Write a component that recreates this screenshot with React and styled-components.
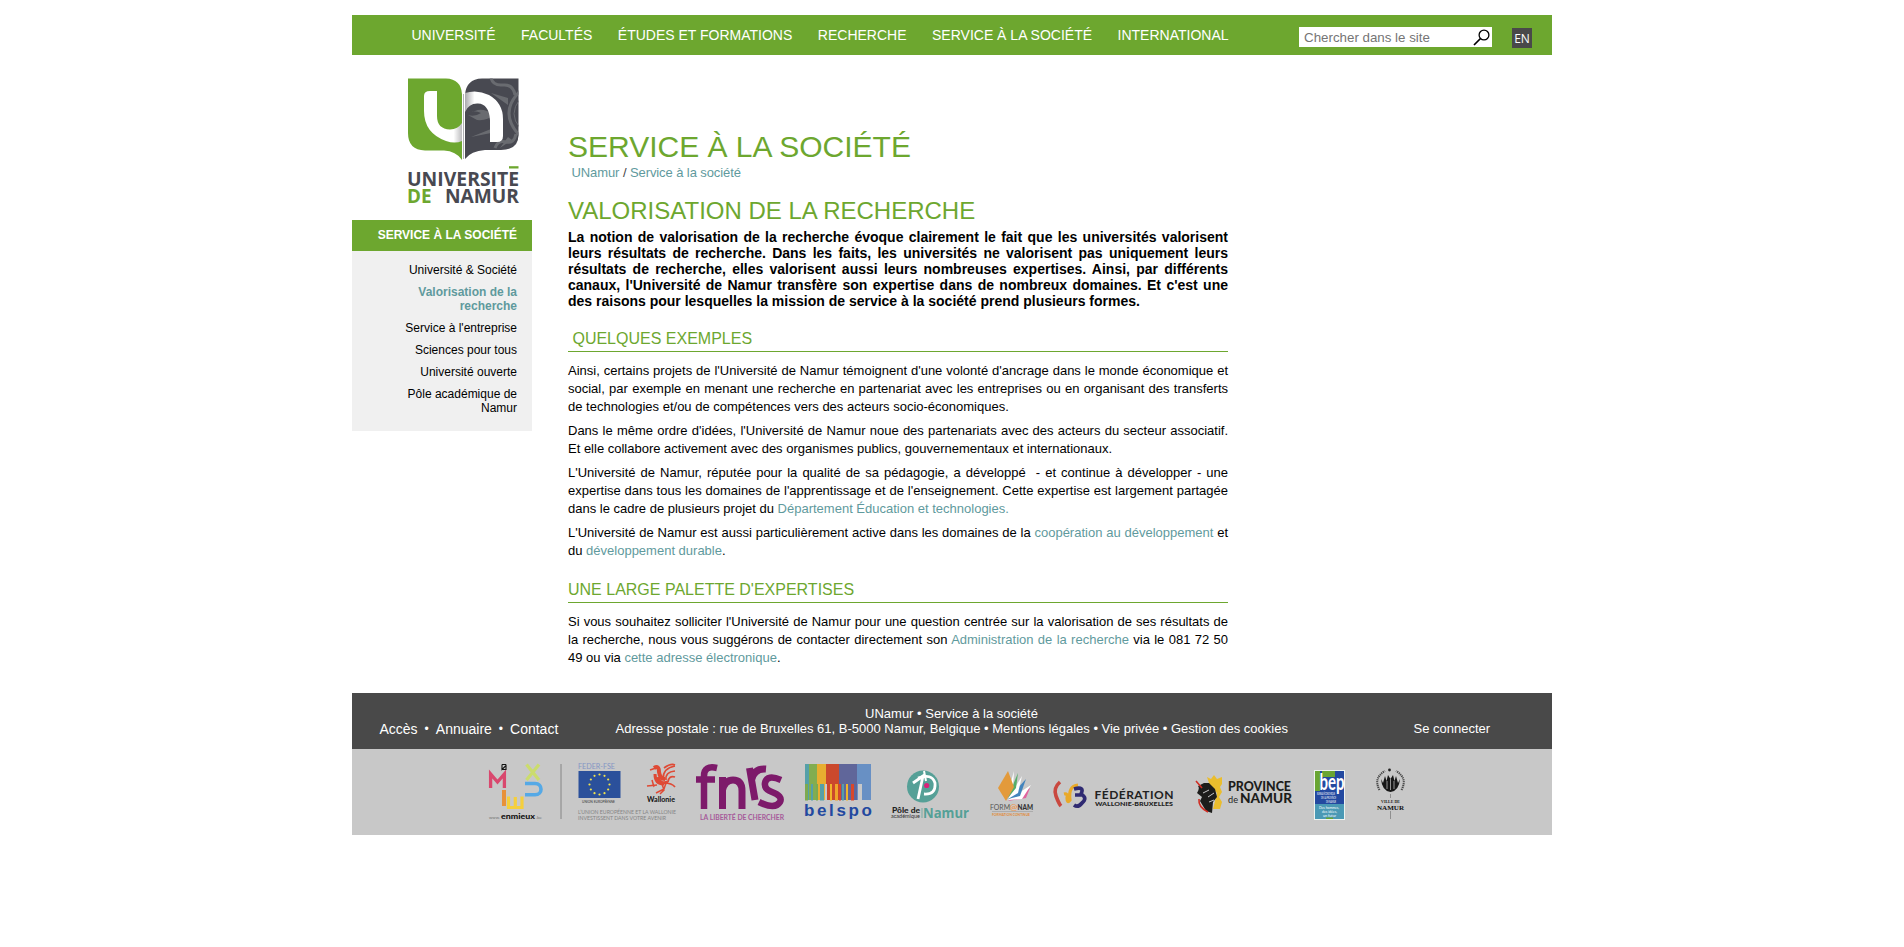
import React from 'react';
import styled, { createGlobalStyle } from 'styled-components';

const GREEN = '#6da72f';
const TEAL = '#5f9a9d';
const DARK = '#494949';

const GlobalStyle = createGlobalStyle`
  body {
    margin: 0;
    background: #fff;
    color: #000;
    font-family: Arial, 'Liberation Sans', sans-serif;
    font-size: 13px;
  }
  a { color: inherit; text-decoration: none; }
`;

const Page = styled.div`
  width: 1200px;
  margin: 0 auto;
  padding-top: 15px;
`;

const TopBar = styled.header`
  display: flex;
  height: 40px;
  background: ${GREEN};
`;

const Nav = styled.nav`
  display: flex;
  gap: 25.5px;
  width: 887.5px;
  padding-left: 59.5px;
  color: #fff;
  font-size: 14px;
  line-height: 40px;
  white-space: nowrap;
`;

const SearchBox = styled.form`
  display: flex;
  align-items: center;
  justify-content: space-between;
  box-sizing: border-box;
  width: 193px;
  height: 20px;
  margin-top: 12px;
  padding: 0 2px 0 5px;
  background: #fff;
`;

const SearchInput = styled.input`
  width: 160px;
  padding: 0;
  border: 0;
  outline: 0;
  background: none;
  font: 13.33px Arial, 'Liberation Sans', sans-serif;
  &::placeholder { color: #757575; opacity: 1; }
`;

const Lang = styled.a`
  width: 20px;
  height: 20px;
  margin: 13px 0 0 20px;
  background: ${DARK};
  color: #fff;
  font: 12px/21px 'Open Sans', sans-serif;
  text-align: center;
`;

const Main = styled.div`
  display: flex;
  height: 638px;
`;

const Sidebar = styled.aside`
  width: 180px;
`;

const LogoLink = styled.a`
  display: block;
  height: 142px;
  padding: 23px 0 0 55px;
`;

const MenuTitle = styled.div`
  height: 31px;
  padding-right: 15px;
  background: ${GREEN};
  color: #fff;
  font-size: 12px;
  font-weight: bold;
  line-height: 30px;
  text-align: right;
`;

const Menu = styled.ul`
  display: flex;
  flex-direction: column;
  gap: 8px;
  box-sizing: border-box;
  height: 180px;
  margin: 0;
  padding: 12px 15px 0 50px;
  background: #f0f0f0;
  list-style: none;
`;

const MenuItem = styled.li`
  color: ${(p) => (p.$active ? TEAL : '#000')};
  font-size: 12px;
  font-weight: ${(p) => (p.$active ? 'bold' : 'normal')};
  line-height: 14px;
  text-align: right;
`;

const Content = styled.main`
  width: 660px;
  padding: 75px 0 0 36px;
`;

const PageTitle = styled.h1`
  margin: 0 0 1px;
  color: ${GREEN};
  font-size: 30px;
  font-weight: normal;
  line-height: 34px;
`;

const Breadcrumb = styled.div`
  padding-left: 3.5px;
  color: ${TEAL};
  letter-spacing: -0.09px;
  line-height: 15px;
  span { color: #444; }
`;

const Heading = styled.h2`
  margin: 17px 0 5px;
  color: ${GREEN};
  font-size: 24px;
  font-weight: normal;
  line-height: 27px;
`;

const Lead = styled.p`
  margin: 0;
  font-size: 14px;
  font-weight: bold;
  line-height: 16px;
  text-align: justify;
`;

const SectionTitle = styled.h3`
  margin: 21px 0 10px;
  padding-bottom: 3px;
  border-bottom: 1px solid ${GREEN};
  color: ${GREEN};
  font-size: 16px;
  font-weight: normal;
  line-height: 18px;
`;

const Paragraph = styled.p`
  margin: 0 0 6px;
  line-height: 18px;
  text-align: justify;
`;

const TextLink = styled.a`
  && { color: ${TEAL}; }
`;

const Footer = styled.footer`
  display: flex;
  box-sizing: border-box;
  height: 56px;
  padding-top: 13px;
  background: ${DARK};
  color: #fff;
  line-height: 15px;
  white-space: nowrap;
`;

const FooterLinks = styled.div`
  display: flex;
  width: 236px;
  padding: 15px 0 0 27.5px;
  font-size: 14px;
  line-height: 17px;
`;

const Bullet = styled.span`
  width: 18.2px;
  font-size: 12px;
  text-align: center;
`;

const FooterCenter = styled.div`
  width: 672px;
  text-align: center;
`;

const FooterLogin = styled.div`
  padding: 15px 0 0 126px;
`;

const Partners = styled.div`
  display: flex;
  align-items: flex-start;
  height: 86px;
  background: #c8c8c8;
`;

const PartnerSvg = styled.svg`
  flex: none;
  margin-left: ${(p) => p.$gap}px;
  overflow: visible;
`;

const LogoSvg = styled.svg`
  overflow: visible;
`;

/* Every partner drawing uses the coordinates of the strip, from x to x + w. */
const Partner = ({ gap, x, w, children }) => (
  <PartnerSvg $gap={gap} width={w} height="86" viewBox={`${x} 749 ${w} 86`}>
    {children}
  </PartnerSvg>
);

const T = ({ x, y, w, size, fill = '#222', weight = 400, font = 'Lato', children, ...rest }) => (
  <text
    x={x}
    y={y}
    textLength={w}
    lengthAdjust="spacingAndGlyphs"
    fontSize={size}
    fill={fill}
    fontWeight={weight}
    fontFamily={`'${font}', sans-serif`}
    {...rest}
  >
    {children}
  </text>
);

const UnamurLogo = () => (
  <LogoSvg width="113" height="130" viewBox="0 0 113 130">
    <defs>
      <linearGradient id="foldLeft" x1="0" x2="1">
        <stop offset="0.78" stopColor="#fff" />
        <stop offset="1" stopColor="#bcbcbe" />
      </linearGradient>
      <linearGradient id="foldRight" x1="0" x2="1">
        <stop offset="0" stopColor="#aaaaae" />
        <stop offset="0.25" stopColor="#fff" />
      </linearGradient>
      <clipPath id="rightPage">
        <path d="M58 81V17Q59 1 75 0.5H111.5V57Q111.5 72 94 72H78Q64 73 58 81Z" />
      </clipPath>
    </defs>
    <path d="M1 0.5H39Q54 1 55 16V82Q49 73 37 72.5H18Q1 72 1 55Z" fill={GREEN} />
    <g clipPath="url(#rightPage)">
      <path d="M57 0H112V82H57Z" fill="#484951" />
      <g fill="none" stroke="#696b70" strokeWidth="3">
        <path d="M113 13Q91 35 113 58" />
        <path d="M113 21Q101 36 113 50" strokeWidth="1" />
        <path d="M84 0Q86 8 96 7T108 17" />
        <path d="M88 70Q91 62 99 64T109 56" />
      </g>
      <path d="M59 34Q69 32 74 35Q68 39 61 37L70 42Q80 43 87 37Q76 29 68 33Z" fill="#696b70" />
      <path d="M84 15L101 20V27Z M64 59L94 47V53Z M93 70L101 59L105 62Z" fill="#696b70" />
    </g>
    <path
      d="M17 18Q17 13 23 13H30V38Q30 51 43 51.5Q51 51 55 45V63Q48 66 39 63Q17 55 17 33Z"
      fill="url(#foldLeft)"
    />
    <path
      d="M58 15Q70 11 82 17Q96 25 96 41V58Q96 64 90 64H83V42Q82 26 71 25.5Q62 25 58 34Z"
      fill="url(#foldRight)"
    />
    <path d="M56.5 16V81" stroke="#b0b1b3" strokeWidth="1" />
    <T x="0" y="107.7" w="112" size="20.4" fill="#484951" weight="700" font="Open Sans">UNIVERSITE</T>
    <path d="M102 88.2h9.5v2.3h-9.5z" fill={GREEN} />
    <T x="0" y="125.4" w="24.5" size="20.4" fill={GREEN} weight="700" font="Open Sans">DE</T>
    <T x="38" y="125.4" w="74" size="20.4" fill="#484951" weight="700" font="Open Sans">NAMUR</T>
  </LogoSvg>
);

const SearchIcon = () => (
  <svg width="17" height="17" viewBox="0 0 17 17" fill="none" stroke="#000">
    <circle cx="11" cy="6" r="4.9" strokeWidth="1.3" />
    <path d="M7.5 9.5L1 16" strokeWidth="1.7" />
  </svg>
);

const STARS = Array.from({ length: 12 }, (_, i) => {
  const a = (i * Math.PI) / 6;
  return [599.5 + 10 * Math.sin(a), 784.5 - 10 * Math.cos(a)];
});

const BELSPO_BARS = [
  [805, 4, '#55a0a8'], [809, 8, '#82ad50'], [817, 9, '#e8ae30'], [826, 13, '#cb492d'],
  [839, 18, '#60669a'], [857, 14, '#6890c4'],
];
const BELSPO_KEYS = [
  [805, 3, '#7caa50'], [811, 2, '#55a0a8'], [816, 2, '#7caa50'], [820, 4, '#55a0a8'],
  [825, 2, '#c8c8c8'], [830, 2, '#f0b52a'], [835, 3, '#f0a52a'], [839, 2, '#d9472a'],
  [842, 2, '#55a0a8'], [846, 2, '#f0b52a'], [851, 3, '#d9472a'], [858, 4, '#c8c8c8'],
];

const PartnerStrip = () => (
  <Partners>
    <Partner gap={137} x={489} w={54}>
      <path d="M502 764.5H506M502 764.5V769.5L506 765.5V769.5H502" stroke="#111" strokeWidth="1.1" fill="none" />
      <g fill="none" strokeWidth="3.3">
        <path d="M490.6 788V774L497.5 782L504.4 774V788" stroke="#d9486e" />
        <path d="M504 790V806" stroke="#e8913a" strokeWidth="4" />
        <path d="M508.5 796.5V807.5H522V796.5M515.3 797V807" stroke="#f5cf3d" strokeWidth="3.2" />
        <path d="M525 783.5H535C543 783.5 543 794.8 535 794.8H525" stroke="#55a9e6" strokeWidth="3.6" />
        <path d="M526.5 764.5L539 780M539 764.5L526.5 780" stroke="#cbdc6d" />
      </g>
      <T x="489" y="819" w="11" size="4.5" fill="#777">www.</T>
      <T x="501" y="819" w="34" size="6.5" fill="#111" weight="900">enmieux</T>
      <T x="536" y="819" w="6" size="4.5" fill="#777">.be</T>
    </Partner>

    <Partner gap={17} x={560} w={2}>
      <path d="M561 764V819" stroke="#999" strokeWidth="1.4" />
    </Partner>

    <Partner gap={16} x={578} w={98}>
      <T x="578" y="769" w="37" size="7" fill="#8495c4">FEDER-FSE</T>
      <path d="M578.5 771H620.5V798H578.5Z" fill="#2b509b" />
      {STARS.map(([cx, cy]) => (
        <circle key={`${cx}-${cy}`} cx={cx} cy={cy} r="1.1" fill="#f1e34b" />
      ))}
      <T x="582" y="803" w="33" size="3.6" fill="#333">UNION EUROPÉENNE</T>
      <g fill="none" stroke="#df4a35">
        <path d="M654 768Q659 765 659 772Q660 779 665 779" strokeWidth="4" />
        <path d="M663 779Q663 768 675 766M666 780Q665 772 675 771M668 782Q669 775 675 777M664 783Q672 783 675 787M664 768Q671 763 675 765" strokeWidth="1.7" />
        <path d="M655 774Q655 784 664 784M658 777Q660 785 668 782" strokeWidth="3" />
        <path d="M657 785L647 786M652 780L654 787M662 784L664 790L660 794M666 783L664 789L656 793M650 770L656 768" strokeWidth="1.5" />
      </g>
      <T x="647" y="802" w="28" size="7" fill="#111" weight="700">Wallonie</T>
      <T x="578" y="813.5" w="98" size="5.2" fill="#858585">L’UNION EUROPÉENNE ET LA WALLONIE</T>
      <T x="578" y="819.5" w="88" size="5.2" fill="#858585">INVESTISSENT DANS VOTRE AVENIR</T>
    </Partner>

    <Partner gap={20} x={696} w={89}>
      <g fill="none" stroke="#7d1a6a" strokeWidth="7">
        <path d="M704 809V776Q704 765 717 768M696 779.5H715" strokeWidth="6.5" />
        <path d="M722.5 809V777M722.5 790Q725 780 733 780Q742 780 742 791V809" />
        <path d="M749.5 768L755 800M751.5 780Q754 768 766 769" />
        <path d="M781 780Q767 774 765 783Q764 789 772 792Q783 796 780 802Q775 810 759 802" strokeWidth="6.5" />
      </g>
      <T x="700" y="820" w="84" size="7" fill="#a65a9a" weight="700">LA LIBERTÉ DE CHERCHER</T>
    </Partner>

    <Partner gap={20} x={805} w={66}>
      {BELSPO_BARS.map(([x, w, c]) => (
        <rect key={x} x={x} y="764" width={w} height="36" fill={c} />
      ))}
      {BELSPO_KEYS.map(([x, w, c]) => (
        <rect key={x} x={x} y="784" width={w} height="16.5" fill={c} />
      ))}
      <T x="804" y="815.7" w="68" size="17" fill="#2349a0" weight="700" font="Liberation Sans" lengthAdjust="spacing">belspo</T>
    </Partner>

    <Partner gap={20} x={891} w={79}>
      <circle cx="923" cy="786.5" r="16" fill="#55a097" />
      <g fill="none" stroke="#fff" strokeWidth="2.8">
        <path d="M913 783L923 776L918 799" />
        <path d="M918 778Q932 773 935 783Q936 795 924 794" />
        <path d="M924 771L926 781" strokeWidth="2" />
      </g>
      <circle cx="926.7" cy="785.5" r="2.6" fill="#d9237a" />
      <T x="892" y="812.5" w="28" size="7.5" weight="900">Pôle de</T>
      <T x="891" y="818" w="29" size="5.5" fill="#333">académique</T>
      <path d="M922 808V818" stroke="#55a097" strokeWidth=".7" />
      <T x="923" y="818" w="46" size="14" fill="#55a097" weight="700" font="Open Sans">Namur</T>
    </Partner>

    <Partner gap={20} x={990} w={44}>
      <path d="M1008 801L1030 788L1026 798Z" fill="#e0649e" />
      <path d="M1008 800L1031 785L1022 799Z" fill="#fff" />
      <path d="M1008 799L1026 779L1020 796Z" fill="#4384bd" />
      <path d="M1008 799L1022 776L1018 793Z" fill="#fff" />
      <path d="M1007 799L1018 773L1016 788Z" fill="#55ae69" />
      <path d="M1006 800L1014 771L1013 787Z" fill="#fff" />
      <path d="M1008 771L1014 787L1006 801L998 788Z" fill="#e39a3b" />
      <T x="990" y="810" w="20" size="6.8" fill="#555">FORM</T>
      <T x="1009.5" y="810" w="8" size="8" fill="#ed9850" weight="700">@</T>
      <T x="1017.5" y="810" w="15.5" size="6.8" fill="#333" weight="900">NAM</T>
      <path d="M992 811.5H1033" stroke="#999" strokeWidth=".6" />
      <T x="992" y="815.6" w="38" size="3.8" fill="#e08a35" weight="700">FORMATION CONTINUE</T>
    </Partner>

    <Partner gap={20} x={1054} w={118}>
      <path d="M1060 782Q1053 788 1056 796T1061 806" stroke="#c9483f" strokeWidth="3.6" fill="none" />
      <path d="M1064 794Q1068 793 1067 798Q1067 804 1070 800Q1068 786 1078 785" stroke="#e9a928" strokeWidth="3.2" fill="none" />
      <path d="M1074 789Q1085 786 1081 794Q1088 798 1082 803Q1078 808 1074 805M1082 795H1075" stroke="#2f2a72" strokeWidth="3.7" fill="none" />
      <T x="1094.5" y="798.5" w="79" size="12" weight="700" lengthAdjust="spacing">FÉDÉRATION</T>
      <T x="1095" y="805.7" w="78" size="6.2" weight="900">WALLONIE-BRUXELLES</T>
    </Partner>

    <Partner gap={23} x={1195} w={97}>
      <path d="M1207 777L1211 779L1214 775L1217 779L1222 777V784L1220 787L1222 792L1219 797L1222 802L1220 809L1213 809L1217 793L1210 786Z" fill="#eabd2d" />
      <path d="M1197 793Q1200 788 1198 786L1204 783L1209 783L1215 789L1217 797L1213 802L1212 813L1206 811L1200 801L1202 797Z" fill="#1d1d1b" />
      <path d="M1196 781L1202 788M1199 799Q1198 807 1208 812" stroke="#d02e24" strokeWidth="1.6" fill="none" />
      <path d="M1203 793L1209 790M1208 797L1214 793M1209 802L1214 800" stroke="#c8c8c8" fill="none" />
      <T x="1228" y="790.5" w="63" size="13.6" fill="#1d1d1b" weight="900">PROVINCE</T>
      <T x="1228" y="803" w="10" size="8.5">de</T>
      <T x="1240" y="803" w="52" size="13.6" fill="#1d1d1b" weight="900">NAMUR</T>
    </Partner>

    <Partner gap={22} x={1314} w={31}>
      <path d="M1314 770H1345V820H1314Z" fill="#eef4f0" />
      <path d="M1315 771H1344V804H1315Z" fill="#2349a0" />
      <path d="M1315 771H1320V786H1315ZM1322 771H1335V777H1322ZM1315 786H1320V791H1315Z" fill="#69a532" />
      <path d="M1315 804H1344V819H1315Z" fill="#4a99b5" />
      <path d="M1326 817.5H1333V819H1326Z" fill="#69a532" />
      <T x="1319.5" y="790" w="25" size="23" fill="#fff" weight="700">bep</T>
      <T x="1317" y="795.3" w="18" size="2.8" fill="#fff">BUREAU ÉCONOMIQUE</T>
      <T x="1321" y="799" w="15" size="3" fill="#fff">DE LA PROVINCE</T>
      <T x="1326" y="802.5" w="10" size="3" fill="#fff">DE NAMUR</T>
      <T x="1319" y="808.5" w="20" size="4" fill="#fff">Des hommes,</T>
      <T x="1322" y="812.5" w="15" size="4" fill="#fff">des idées,</T>
      <T x="1323" y="816.8" w="13" size="4" fill="#fff">un futur</T>
    </Partner>

    <Partner gap={31} x={1376} w={29}>
      <path d="M1379.5 790Q1373 778 1385 771" stroke="#444" strokeWidth="2" strokeDasharray="1.2 .8" fill="none" />
      <path d="M1401.5 790Q1408 778 1396 771" stroke="#444" strokeWidth="2" strokeDasharray="1.2 .8" fill="none" />
      <path d="M1381 779Q1382 791 1390.5 792Q1399 791 1400 779L1398 783L1396 776L1394.5 781L1393 775L1390.5 779L1388 775L1386.5 781L1385 776L1383 783Z" fill="#171717" />
      <path d="M1390.5 779V790M1387 781V789M1394 781V789" stroke="#c8c8c8" strokeWidth=".7" />
      <circle cx="1389.5" cy="770" r="1.4" fill="#222" />
      <path d="M1390.5 794V798M1390.5 811V819" stroke="#888" strokeWidth=".9" />
      <T x="1381" y="803.3" w="19" size="4.8" weight="700" font="Liberation Serif">VILLE DE</T>
      <T x="1377" y="809.5" w="27" size="7" fill="#111" weight="700" font="Liberation Serif">NAMUR</T>
    </Partner>
  </Partners>
);

const NAV = ['UNIVERSITÉ', 'FACULTÉS', 'ÉTUDES ET FORMATIONS', 'RECHERCHE', 'SERVICE À LA SOCIÉTÉ', 'INTERNATIONAL'];
const MENU = [
  'Université & Société', 'Valorisation de la recherche', "Service à l'entreprise",
  'Sciences pour tous', 'Université ouverte', 'Pôle académique de Namur',
];

export default function App() {
  return (
    <>
      <GlobalStyle />
      <Page>
        <TopBar>
          <Nav>
            {NAV.map((label) => <a key={label} href="#">{label}</a>)}
          </Nav>
          <SearchBox>
            <SearchInput placeholder="Chercher dans le site" />
            <SearchIcon />
          </SearchBox>
          <Lang href="#">EN</Lang>
        </TopBar>

        <Main>
          <Sidebar>
            <LogoLink href="#"><UnamurLogo /></LogoLink>
            <MenuTitle>SERVICE À LA SOCIÉTÉ</MenuTitle>
            <Menu>
              {MENU.map((label, i) => (
                <MenuItem key={label} $active={i === 1}><a href="#">{label}</a></MenuItem>
              ))}
            </Menu>
          </Sidebar>

          <Content>
            <PageTitle>SERVICE À LA SOCIÉTÉ</PageTitle>
            <Breadcrumb><a href="#">UNamur</a> <span>/</span> <a href="#">Service à la société</a></Breadcrumb>
            <Heading>VALORISATION DE LA RECHERCHE</Heading>
            <Lead>
              La notion de valorisation de la recherche évoque clairement le fait que les universités valorisent
              leurs résultats de recherche. Dans les faits, les universités ne valorisent pas uniquement leurs
              résultats de recherche, elles valorisent aussi leurs nombreuses expertises. Ainsi, par différents
              canaux, l'Université de Namur transfère son expertise dans de nombreux domaines. Et c'est une
              des raisons pour lesquelles la mission de service à la société prend plusieurs formes.
            </Lead>
            <SectionTitle>&nbsp;QUELQUES EXEMPLES</SectionTitle>
            <Paragraph>
              Ainsi, certains projets de l'Université de Namur témoignent d'une volonté d'ancrage dans le monde
              économique et social, par exemple en menant une recherche en partenariat avec les entreprises ou en
              organisant des transferts de technologies et/ou de compétences vers des acteurs socio-économiques.
            </Paragraph>
            <Paragraph>
              Dans le même ordre d'idées, l'Université de Namur noue des partenariats avec des acteurs du secteur
              associatif. Et elle collabore activement avec des organismes publics, gouvernementaux et internationaux.
            </Paragraph>
            <Paragraph>
              L'Université de Namur, réputée pour la qualité de sa pédagogie, a développé&nbsp; - et continue à
              développer - une expertise dans tous les domaines de l'apprentissage et de l'enseignement. Cette
              expertise est largement partagée dans le cadre de plusieurs projet du{' '}
              <TextLink href="#">Département Éducation et technologies.</TextLink>
            </Paragraph>
            <Paragraph>
              L'Université de Namur est aussi particulièrement active dans les domaines de la{' '}
              <TextLink href="#">coopération au développement</TextLink> et du{' '}
              <TextLink href="#">développement durable</TextLink>.
            </Paragraph>
            <SectionTitle>UNE LARGE PALETTE D'EXPERTISES</SectionTitle>
            <Paragraph>
              Si vous souhaitez solliciter l'Université de Namur pour une question centrée sur la valorisation de ses
              résultats de la recherche, nous vous suggérons de contacter directement son{' '}
              <TextLink href="#">Administration de la recherche</TextLink> via le 081 72 50 49 ou via{' '}
              <TextLink href="#">cette adresse électronique</TextLink>.
            </Paragraph>
          </Content>
        </Main>

        <Footer>
          <FooterLinks>
            <a href="#">Accès</a>
            <Bullet>•</Bullet>
            <a href="#">Annuaire</a>
            <Bullet>•</Bullet>
            <a href="#">Contact</a>
          </FooterLinks>
          <FooterCenter>
            <div>UNamur • Service à la société</div>
            <div>
              Adresse postale : rue de Bruxelles 61, B-5000 Namur, Belgique • Mentions légales • Vie privée •
              Gestion des cookies
            </div>
          </FooterCenter>
          <FooterLogin>Se connecter</FooterLogin>
        </Footer>
        <PartnerStrip />
      </Page>
    </>
  );
}
